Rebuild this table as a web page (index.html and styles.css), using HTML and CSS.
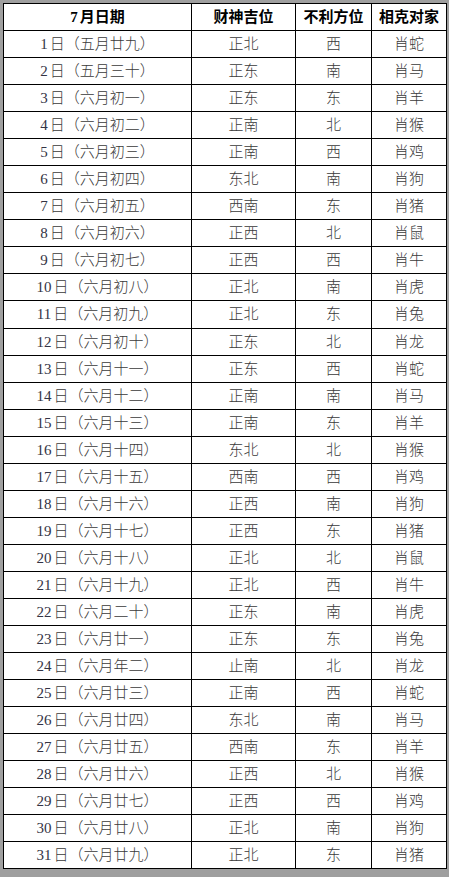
FILE: index.html
```html
<!DOCTYPE html>
<html lang="zh">
<head>
<meta charset="utf-8">
<link rel="stylesheet" href="styles.css">
</head>
<body>
<table class="tbl">
<colgroup><col class="c1"><col class="c2"><col class="c3"><col class="c4"></colgroup>
<thead>
<tr><th><span class="n">7</span>月日期</th><th>财神吉位</th><th>不利方位</th><th>相克对家</th></tr>
</thead>
<tbody>
<tr><td><span class="n">1</span>日（五月廿九）</td><td>正北</td><td>西</td><td>肖蛇</td></tr>
<tr><td><span class="n">2</span>日（五月三十）</td><td>正东</td><td>南</td><td>肖马</td></tr>
<tr><td><span class="n">3</span>日（六月初一）</td><td>正东</td><td>东</td><td>肖羊</td></tr>
<tr><td><span class="n">4</span>日（六月初二）</td><td>正南</td><td>北</td><td>肖猴</td></tr>
<tr><td><span class="n">5</span>日（六月初三）</td><td>正南</td><td>西</td><td>肖鸡</td></tr>
<tr><td><span class="n">6</span>日（六月初四）</td><td>东北</td><td>南</td><td>肖狗</td></tr>
<tr><td><span class="n">7</span>日（六月初五）</td><td>西南</td><td>东</td><td>肖猪</td></tr>
<tr><td><span class="n">8</span>日（六月初六）</td><td>正西</td><td>北</td><td>肖鼠</td></tr>
<tr><td><span class="n">9</span>日（六月初七）</td><td>正西</td><td>西</td><td>肖牛</td></tr>
<tr><td><span class="n">10</span>日（六月初八）</td><td>正北</td><td>南</td><td>肖虎</td></tr>
<tr><td><span class="n">11</span>日（六月初九）</td><td>正北</td><td>东</td><td>肖兔</td></tr>
<tr><td><span class="n">12</span>日（六月初十）</td><td>正东</td><td>北</td><td>肖龙</td></tr>
<tr><td><span class="n">13</span>日（六月十一）</td><td>正东</td><td>西</td><td>肖蛇</td></tr>
<tr><td><span class="n">14</span>日（六月十二）</td><td>正南</td><td>南</td><td>肖马</td></tr>
<tr><td><span class="n">15</span>日（六月十三）</td><td>正南</td><td>东</td><td>肖羊</td></tr>
<tr><td><span class="n">16</span>日（六月十四）</td><td>东北</td><td>北</td><td>肖猴</td></tr>
<tr><td><span class="n">17</span>日（六月十五）</td><td>西南</td><td>西</td><td>肖鸡</td></tr>
<tr><td><span class="n">18</span>日（六月十六）</td><td>正西</td><td>南</td><td>肖狗</td></tr>
<tr><td><span class="n">19</span>日（六月十七）</td><td>正西</td><td>东</td><td>肖猪</td></tr>
<tr><td><span class="n">20</span>日（六月十八）</td><td>正北</td><td>北</td><td>肖鼠</td></tr>
<tr><td><span class="n">21</span>日（六月十九）</td><td>正北</td><td>西</td><td>肖牛</td></tr>
<tr><td><span class="n">22</span>日（六月二十）</td><td>正东</td><td>南</td><td>肖虎</td></tr>
<tr><td><span class="n">23</span>日（六月廿一）</td><td>正东</td><td>东</td><td>肖兔</td></tr>
<tr><td><span class="n">24</span>日（六月年二）</td><td>止南</td><td>北</td><td>肖龙</td></tr>
<tr><td><span class="n">25</span>日（六月廿三）</td><td>正南</td><td>西</td><td>肖蛇</td></tr>
<tr><td><span class="n">26</span>日（六月廿四）</td><td>东北</td><td>南</td><td>肖马</td></tr>
<tr><td><span class="n">27</span>日（六月廿五）</td><td>西南</td><td>东</td><td>肖羊</td></tr>
<tr><td><span class="n">28</span>日（六月廿六）</td><td>正西</td><td>北</td><td>肖猴</td></tr>
<tr><td><span class="n">29</span>日（六月廿七）</td><td>正西</td><td>西</td><td>肖鸡</td></tr>
<tr><td><span class="n">30</span>日（六月廿八）</td><td>正北</td><td>南</td><td>肖狗</td></tr>
<tr><td><span class="n">31</span>日（六月廿九）</td><td>正北</td><td>东</td><td>肖猪</td></tr>
</tbody>
</table>
</body>
</html>
```
FILE: styles.css
```css
html, body {
  margin: 0;
  padding: 0;
}
body {
  background: #9f9f9f;
  padding: 3px 3px 8px 3px;
  font-family: "Liberation Serif", "Noto Sans CJK SC", serif;
}
.tbl {
  border-collapse: collapse;
  table-layout: fixed;
  width: 443px;
  background: #ffffff;
  border: 1px solid #000;
}
.c1 { width: 188px; }
.c2 { width: 104px; }
.c3 { width: 76px; }
.c4 { width: 75px; }
.tbl th, .tbl td {
  border: 1px solid #000;
  padding: 0;
  text-align: center;
  vertical-align: middle;
  font-size: 15px;
  line-height: 18px;
}
.tbl thead tr { height: 27px; }
.tbl tbody tr { height: 27.06px; }
.tbl th {
  font-weight: 700;
  color: #000;
}
.tbl td {
  font-weight: 300;
  color: #3a3a3a;
}
.n {
  margin-right: 2px;
}
.tbl td .n {
  color: #333344;
}
```
